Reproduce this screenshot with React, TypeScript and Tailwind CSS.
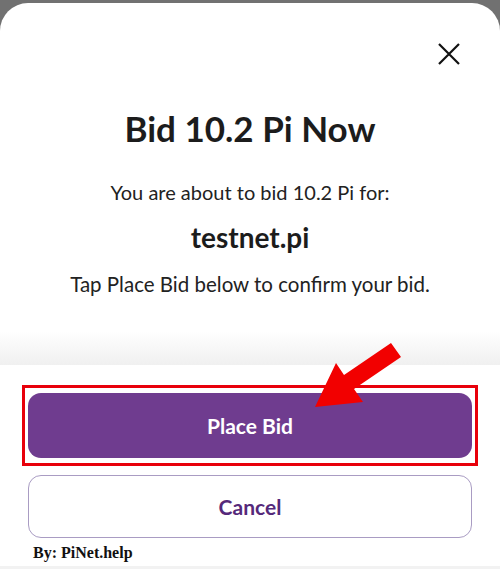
import React from 'react';

const font = { fontFamily: 'Lato, "Open Sans", sans-serif' };

const App: React.FC = () => {
  return (
    <div className="relative h-[569px] w-[500px] overflow-hidden bg-[#717171] pt-[3px]" style={font}>
      <div className="flex h-full flex-col overflow-hidden rounded-t-[28px] bg-white">
        {/* Body */}
        <div className="flex h-[362px] flex-col">
          <div className="flex justify-end pr-[40px] pt-[40px]">
            <button className="h-[22px] w-[22px]">
              <svg width="22" height="22" viewBox="0 0 22 22">
                <path d="M1 1L21 21M21 1L1 21" stroke="#111" strokeWidth="2.2" />
              </svg>
            </button>
          </div>
          <h1 className="mt-[43px] text-center text-[35px] font-bold leading-[40px] text-[#1c1c1c]">
            Bid 10.2 Pi Now
          </h1>
          <p className="mt-[31px] text-center text-[20px] leading-[26px] text-[#222]">
            You are about to bid 10.2 Pi for:
          </p>
          <p className="mt-[15px] text-center text-[28px] font-bold leading-[34px] text-[#1c1c1c]">
            testnet.pi
          </p>
          <p className="mt-[17px] text-center text-[20.5px] leading-[26px] text-[#222]">
            Tap Place Bid below to confirm your bid.
          </p>
          <div className="mt-auto h-[34px] bg-gradient-to-b from-white to-[#f0f0f0]" />
        </div>

        {/* Footer */}
        <div className="flex flex-1 flex-col px-[22px] pt-[20px]">
          <div className="border-[3px] border-[#e8000b] px-[3px] py-[5px]">
            <button className="flex h-[65px] w-full items-center justify-center rounded-[13px] bg-[#6f3c8f] text-[21px] font-bold text-white">
              Place Bid
            </button>
          </div>
          <button className="mx-[6px] mt-[9px] flex h-[63px] items-center justify-center rounded-[13px] border border-[#a99cc3] text-[21px] font-bold text-[#55297a]">
            Cancel
          </button>
          <div
            className="ml-[11px] mt-[5px] text-[16px] font-bold leading-[20px] text-[#111]"
            style={{ fontFamily: '"Liberation Serif", serif' }}
          >
            By: PiNet.help
          </div>
          <div className="-mx-[22px] mt-auto h-[3px] bg-[#f2f2f2]" />
        </div>
      </div>

      {/* Annotation arrow */}
      <svg className="pointer-events-none absolute left-0 top-0" width="500" height="569">
        <polygon
          points="391,343 401,357 354,389 363,402 315,407 336,363 344,375"
          fill="#f20000"
        />
      </svg>
    </div>
  );
};

export default App;
